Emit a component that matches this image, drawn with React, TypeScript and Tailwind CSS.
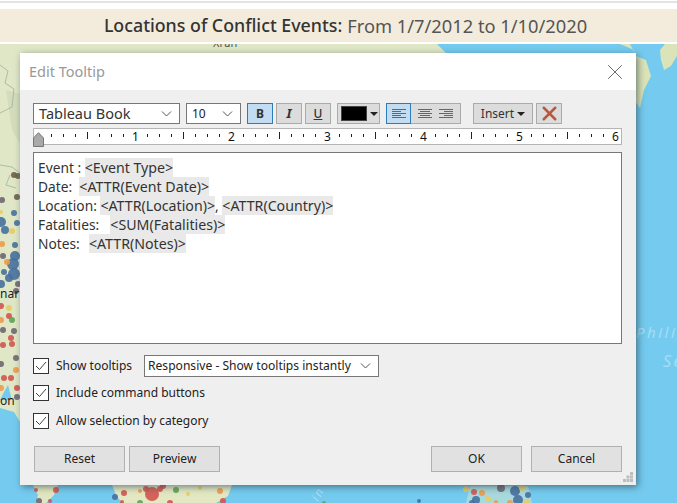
import { X } from 'lucide-react'

const font = { fontFamily: '"Noto Sans", sans-serif' }

const DOT = {
  r: '#d2544f',
  b: '#47709f',
  o: '#ee9a4d',
  y: '#e9cb62',
  g: '#5fa356',
  p: '#6f6672',
  k: '#6b5f4d',
}

// x, y, radius, colour
const dots: [number, number, number, keyof typeof DOT][] = [
  [14, 175, 3, 'k'], [18, 176, 3, 'k'], [2, 200, 3, 'p'], [17, 197, 3, 'k'], [1, 212, 2, 'y'],
  [14, 213, 3, 'b'], [1, 222, 5, 'b'], [5, 230, 4, 'b'], [17, 223, 3, 'b'], [12, 231, 3, 'y'],
  [15, 245, 3, 'b'], [2, 244, 3, 'o'], [3, 256, 3, 'p'], [15, 256, 5, 'b'], [13, 264, 6, 'b'],
  [7, 262, 3, 'o'], [4, 272, 3, 'b'], [14, 274, 6, 'b'], [9, 278, 4, 'b'], [1, 284, 4, 'b'],
  [18, 284, 3, 'p'], [16, 291, 3, 'p'], [1, 306, 3, 'r'], [9, 308, 3, 'y'], [1, 320, 3, 'o'],
  [9, 316, 3, 'r'], [12, 320, 3, 'g'], [3, 330, 3, 'p'], [11, 338, 3, 'r'], [14, 331, 3, 'p'],
  [3, 345, 3, 'r'], [12, 344, 3, 'r'], [16, 358, 3, 'p'], [1, 364, 3, 'p'], [16, 370, 3, 'o'],
  [4, 378, 3, 'r'], [11, 378, 3, 'r'], [17, 388, 3, 'r'], [1, 388, 3, 'o'], [17, 397, 3, 'p'],
  [36, 490, 2, 'r'], [56, 490, 3, 'r'], [39, 501, 3, 'p'], [50, 501, 2, 'r'],
  [115, 497, 3, 'b'], [124, 493, 3, 'r'], [140, 491, 2, 'o'], [152, 494, 7, 'r'], [146, 489, 3, 'r'],
  [160, 489, 3, 'r'], [176, 490, 3, 'g'], [140, 503, 3, 'g'], [122, 502, 2, 'r'], [170, 503, 3, 'r'],
  [188, 494, 2, 'y'], [220, 491, 3, 'o'], [223, 501, 3, 'r'], [200, 488, 2, 'y'], [163, 486, 3, 'r'],
  [419, 501, 2, 'b'], [324, 503, 2, 'g'],
  [466, 489, 3, 'y'], [474, 492, 3, 'r'], [482, 493, 3, 'o'], [476, 500, 4, 'b'], [488, 499, 3, 'y'],
  [472, 503, 3, 'b'], [501, 488, 4, 'p'], [515, 491, 5, 'b'], [522, 488, 3, 'y'], [528, 495, 3, 'b'],
  [518, 500, 5, 'b'], [510, 503, 3, 'o'], [527, 502, 3, 'y'], [496, 502, 2, 'o'],
]

function MapBackdrop() {
  return (
    <svg className="absolute left-0 top-0" width="677" height="503" viewBox="0 0 677 503">
      <rect width="677" height="503" fill="#74cbef" />
      <path d="M0 44H437L447 54 440 90 300 200 60 430 22 425 14 412 0 408Z" fill="#dfe7c6" />
      <path d="M6 90L24 95V150L12 130Z" fill="#cdd8b6" opacity="0.7" />
      <path d="M0 65l8 6-3 12 9 6-2 18-12 6M0 165l12 2 8 6 4-3M10 175l-4 10 10 3" fill="none" stroke="#9aa8a0" strokeWidth="0.7" />
      <path d="M620 44H630L636 56 646 60 651 76 644 90 640 108 634 100V50Z" fill="#dbe3b8" />
      <path d="M665 44H677V56L671 66 664 70 661 60 660 50Z" fill="#dbe3b8" />
      <path d="M33 485L58 485 54 495 46 503H36L38 495Z" fill="#e0e6bf" />
      <path d="M112 485H232L228 496 216 503H122L116 495Z" fill="#e3e8c3" />
      <path d="M470 486H528L532 503H466Z" fill="#e8eccd" opacity="0.45" />
      {dots.map(([x, y, r, c], i) => (
        <circle key={i} cx={x} cy={y} r={r} fill={DOT[c]} opacity="0.9" />
      ))}
      <path d="M0 400H12L8 385 4 392Z" fill="#74cbef" />
      <g style={font}>
        <text x="213" y="47" fontSize="11" fill="#555">Xi'an</text>
        <text x="0" y="298" fontSize="12" fill="#222">nar</text>
        <text x="0" y="405" fontSize="12" fill="#222">on</text>
        <text x="636" y="338" fontSize="15" letterSpacing="2.5" fontStyle="italic" fill="#a6def5">Philip</text>
        <text x="663" y="367" fontSize="16" letterSpacing="2.5" fontStyle="italic" fill="#a6def5">Se</text>
        <text x="318" y="502" fontSize="12" letterSpacing="2" fontStyle="italic" fill="#a6def5" transform="rotate(-62 318 502)">in</text>
      </g>
    </svg>
  )
}

function Chevron({ className = 'right-[7px]' }: { className?: string }) {
  return (
    <svg className={`absolute top-1/2 -translate-y-1/2 ${className}`} width="11" height="6" viewBox="0 0 11 6">
      <path d="M1 .5l4.500 4.500L10 .5" fill="none" stroke="#555" strokeWidth="1" />
    </svg>
  )
}

function Ruler() {
  const ticks = []
  for (let i = 0; i < 49; i++) {
    const x = 5.5 + i * 12
    if (i % 8 === 0) continue
    ticks.push(
      <line key={i} x1={x} x2={x} y1={i % 4 === 0 ? 3 : 5} y2={i % 4 === 0 ? 10 : 8} stroke="#222" strokeWidth="1" />
    )
  }
  return (
    <div className="relative mt-1 h-[17px] w-[589px] border border-[#b5b5b5] bg-white">
      <svg className="absolute left-0 top-0" width="587" height="15" viewBox="0 0 587 15">
        {ticks}
        {[1, 2, 3, 4, 5, 6].map((n) => (
          <text key={n} x={5.5 + n * 96} y="12" textAnchor="middle" fontSize="12" fill="#111" style={font}>
            {n}
          </text>
        ))}
      </svg>
      <svg className="absolute -left-px top-[3px]" width="12" height="15" viewBox="0 0 12 15">
        <path d="M.5 14.500V6L5.500.7 10.500 6v8.500Z" fill="#a9a9a9" stroke="#777" />
      </svg>
    </div>
  )
}

function ToolButton({ children, active, className = '' }: { children: React.ReactNode; active?: boolean; className?: string }) {
  return (
    <div
      className={`flex h-[21px] items-center justify-center border ${
        active ? 'border-[#2b7cb8] bg-[#c2dcf2] text-[#333]' : 'border-[#ababab] bg-[#dcdcdc] text-[#333]'
      } ${className}`}
    >
      {children}
    </div>
  )
}

function AlignIcon({ rows }: { rows: [number, number][] }) {
  return (
    <svg width="14" height="9" viewBox="0 0 14 9">
      {rows.map(([x, w], i) => (
        <rect key={i} x={x} y={i * 2} width={w} height="1" fill="#666" />
      ))}
    </svg>
  )
}

function Check({ label }: { label: string }) {
  return (
    <div className="flex items-center gap-[7px]">
      <div className="flex size-[16px] items-center justify-center border border-[#333] bg-white">
        <svg width="12" height="10" viewBox="0 0 12 10">
          <path d="M1 5l3.500 3.500L11 1" fill="none" stroke="#444" strokeWidth="1" />
        </svg>
      </div>
      <span className="text-[12px] text-[#222]">{label}</span>
    </div>
  )
}

function Token({ children, className = '' }: { children: string; className?: string }) {
  return <span className={`inline-block bg-[#e9e9e9] text-[14.2px] ${className}`}>{children}</span>
}

function DialogButton({ label }: { label: string }) {
  return (
    <div className="flex h-[26px] w-[91px] items-center justify-center border border-[#b0b0b0] bg-[#e1e1e1] text-[12px] text-[#222]">
      {label}
    </div>
  )
}

export default function App() {
  return (
    <div className="relative flex h-[503px] w-[677px] flex-col overflow-hidden bg-white" style={font}>
      <div className="relative flex-1">
        <MapBackdrop />
      </div>

      {/* title strip sits over the map */}
      <div className="absolute left-0 right-0 top-0 h-[44px] bg-white">
        <div className="mt-px h-[2px] bg-[#e3e3e3]" />
        <div className="mt-[6px] flex h-[33px] items-center justify-center bg-[#f3ecdc] pl-[14px] text-[#555]">
          <span className="text-[17.8px] font-medium text-[#333]">Locations of Conflict Events:</span>
          <span className="ml-[5px] text-[18.3px]">From 1/7/2012 to 1/10/2020</span>
        </div>
      </div>

      <div className="absolute left-[20px] top-[53px] flex h-[432px] w-[616px] flex-col bg-[#efefef] shadow-[2px_2px_7px_rgba(40,60,70,0.6)]">
        <div className="flex h-[37px] shrink-0 items-center justify-between bg-white pl-[9px] pr-[8px] text-[14.5px] text-[#999]">
          <span>Edit Tooltip</span>
          <X size={26} strokeWidth={0.9} color="#666" />
        </div>

        <div className="flex flex-1 flex-col pl-[13px] pt-[13px]">
          <div className="flex items-center">
            <div className="relative flex h-[21px] w-[147px] items-center border border-[#777] bg-white pl-[5px] text-[14.5px] leading-none text-[#333]">
              Tableau Book
              <Chevron />
            </div>
            <div className="relative ml-[6px] flex h-[21px] w-[55px] items-center border border-[#777] bg-white pl-[5px] text-[12px] leading-none text-[#222]">
              10
              <Chevron />
            </div>
            <ToolButton active className="ml-[6px] w-[26px] text-[12px] font-bold">B</ToolButton>
            <ToolButton className="ml-[3px] w-[26px] text-[13px] font-bold italic" >I</ToolButton>
            <ToolButton className="ml-[3px] w-[26px] text-[12px] font-medium underline">U</ToolButton>
            <ToolButton className="ml-[6px] w-[43px] justify-start gap-[3px] pl-[3px]">
              <div className="h-[15px] w-[26px] border border-[#444] bg-black" />
              <svg width="8" height="4" viewBox="0 0 8 4">
                <path d="M0 0h8L4 4Z" fill="#222" />
              </svg>
            </ToolButton>
            <div className="ml-[6px] flex h-[21px] w-[75px]">
              <ToolButton active className="w-[25px]">
                <AlignIcon rows={[[0, 14], [0, 9], [0, 14], [0, 9], [0, 14]]} />
              </ToolButton>
              <div className="flex h-[21px] flex-1 items-center justify-around border border-l-0 border-[#ababab] bg-[#dcdcdc] px-[4px]">
                <AlignIcon rows={[[0, 14], [2, 10], [0, 14], [2, 10], [0, 14]]} />
                <AlignIcon rows={[[0, 14], [5, 9], [0, 14], [5, 9], [0, 14]]} />
              </div>
            </div>
            <ToolButton className="ml-[12px] w-[60px] gap-[3px] text-[12px]">
              Insert
              <svg width="8" height="4" viewBox="0 0 8 4">
                <path d="M0 0h8L4 4Z" fill="#222" />
              </svg>
            </ToolButton>
            <ToolButton className="ml-[3px] w-[26px]">
              <X size={23} strokeWidth={2.6} color="#b9583f" className="shrink-0" />
            </ToolButton>
          </div>

          <Ruler />

          <div className="mt-[7px] h-[192px] w-[589px] border border-[#777] bg-white pl-[4px] pt-[5px] text-[13.75px] leading-[19px] text-[#333]">
            <div>Event : <Token>{'<Event Type>'}</Token></div>
            <div>Date:&nbsp; <Token>{'<ATTR(Event Date)>'}</Token></div>
            <div>Location: <Token>{'<ATTR(Location)>'}</Token>, <Token>{'<ATTR(Country)>'}</Token></div>
            <div>Fatalities:&nbsp; <Token className="ml-[4px]">{'<SUM(Fatalities)>'}</Token></div>
            <div>Notes:&nbsp; <Token className="ml-[2px]">{'<ATTR(Notes)>'}</Token></div>
          </div>

          <div className="mt-[11px] flex items-center">
            <div className="w-[111px]">
              <Check label="Show tooltips" />
            </div>
            <div className="relative flex h-[22px] w-[235px] items-center border border-[#777] bg-white pl-[3px] text-[12.1px] text-[#222]">
              Responsive - Show tooltips instantly
              <Chevron />
            </div>
          </div>
          <div className="mt-[7px]">
            <Check label="Include command buttons" />
          </div>
          <div className="mt-[10px]">
            <Check label="Allow selection by category" />
          </div>

          <div className="mt-[16px] flex w-[589px] pl-px">
            <DialogButton label="Reset" />
            <div className="ml-[4px]">
              <DialogButton label="Preview" />
            </div>
            <div className="ml-auto">
              <DialogButton label="OK" />
            </div>
            <div className="ml-[9px]">
              <DialogButton label="Cancel" />
            </div>
          </div>
        </div>

        {/* resize grip */}
        <svg className="absolute bottom-[2px] right-[2px]" width="11" height="11" viewBox="0 0 11 11">
          <path d="M7 0h3v3H7zM3.500 3.500h3v3h-3zM7 3.500h3v3H7zM0 7h3v3H0zM3.500 7h3v3h-3zM7 7h3v3H7z" fill="#bdbdbd" />
        </svg>
      </div>
    </div>
  )
}
